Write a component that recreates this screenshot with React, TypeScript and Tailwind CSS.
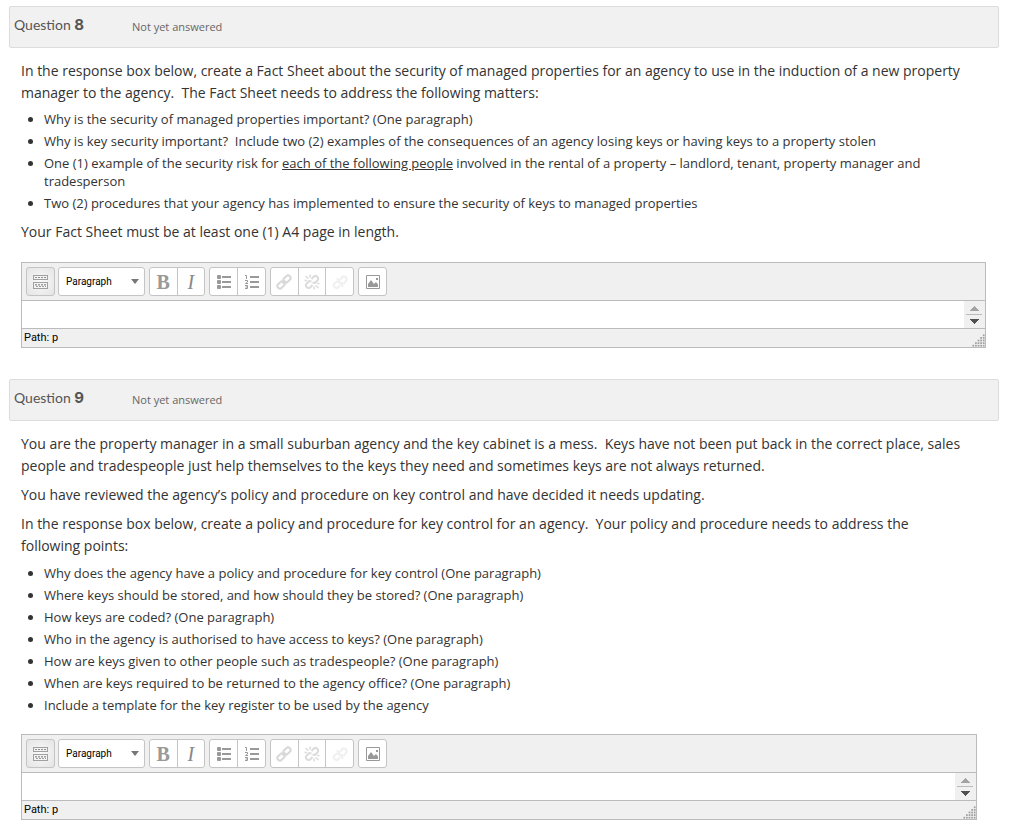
import React from "react";

function Group({ className, children }: { className: string; children: React.ReactNode }) {
  return (
    <div className={`flex h-[29px] divide-x divide-[#c4c4c4] overflow-hidden rounded-[3px] border border-[#c4c4c4] bg-white ${className}`}>
      {children}
    </div>
  );
}

function Tool({ label, disabled, children }: { label: string; disabled?: boolean; children: React.ReactNode }) {
  return (
    <button type="button" aria-label={label} disabled={disabled} className="flex min-w-0 flex-1 items-center justify-center">
      {children}
    </button>
  );
}

function KeyboardIcon() {
  return (
    <svg width="16" height="16" viewBox="0 0 16 16" shapeRendering="crispEdges">
      <path d="M.5 1.5h14v4H.5zM.5 8.5h14v6H.5z" fill="#f4f4f4" stroke="#a0a0a0" />
      <path d="M2 3.5h12" stroke="#909090" strokeDasharray="2 1" />
      <path d="M2 10.5h12M3 12.5h10" stroke="#a0a0a0" strokeDasharray="2 1" />
      <path d="M2 11.5h12" stroke="#c8c8c8" strokeDasharray="2 1" />
    </svg>
  );
}

function BulletIcon() {
  return (
    <svg width="16" height="16" viewBox="0 0 16 16" fill="#999">
      <path d="M6 2h9v2H6zM6 7h9v2H6zM6 12h9v2H6z" />
      <rect x="1" y="1" width="4" height="4" rx="1" />
      <rect x="1" y="6" width="4" height="4" rx="1" />
      <rect x="1" y="11" width="4" height="4" rx="1" />
    </svg>
  );
}

function NumberIcon() {
  return (
    <svg width="16" height="16" viewBox="0 0 16 16" fill="none" stroke="#999">
      <path d="M6 3h9M6 8h9M6 13h9" strokeWidth="2" />
      <path d="M1 1.500h1.500v3.500M1 6.500h2.500v1.500L1.500 9.500h2.500M1 11.500h2.500v3H1M1.500 13h2" />
    </svg>
  );
}

function LinkIcon() {
  return (
    <svg width="16" height="16" viewBox="0 0 16 16" fill="none" stroke="#d8d8d8" strokeWidth="2">
      <rect x="-4" y="-2.500" width="8" height="5" rx="2.500" transform="translate(5 11) rotate(-45)" />
      <rect x="-4" y="-2.500" width="8" height="5" rx="2.500" transform="translate(11 5) rotate(-45)" />
      <path d="M6.500 9.500l3-3" />
    </svg>
  );
}

function UnlinkIcon() {
  return (
    <svg width="16" height="16" viewBox="0 0 16 16" fill="none" stroke="#dcdcdc" strokeWidth="2">
      <path d="M7.500 5l2-2.200a2.600 2.600 0 0 1 3.800 3.700L11 9 8.500 8.500M8.500 11l-2 2.200a2.600 2.600 0 0 1-3.800-3.700L5 7l2.500.5" />
      <path d="M1.500 2l3 2.500M6 .5v3M.5 6.500h2.500M14.500 14l-3-2.500M10 15.500v-3M15.500 9.500h-2.500" strokeWidth="1.500" />
    </svg>
  );
}

function NoLinkIcon() {
  return (
    <svg width="16" height="16" viewBox="0 0 16 16" fill="none" stroke="#f0f0f0" strokeWidth="2">
      <path d="M8 6l2-2.500a2.400 2.400 0 0 1 4 3.500L12 9.500 9 9M8 11l-1.500 2a2.400 2.400 0 0 1-4-3.500L5 7.500l2 .5M5 4l6 9" />
    </svg>
  );
}

function ImageIcon() {
  return (
    <svg width="16" height="16" viewBox="0 0 16 16">
      <path d="M1.500 1.500h13v13h-13z" fill="#fff" stroke="#999" />
      <path d="M3 13v-3l3-4 3 4 2-2 2 2.500V13z" fill="#999" />
      <rect x="11" y="4" width="2" height="2" fill="#999" />
    </svg>
  );
}

function Grip() {
  return (
    <svg width="13" height="13" viewBox="0 0 15 15" fill="#a0a0a0">
      {[1, 2, 3, 4, 5].map((r) =>
        Array.from({ length: r }, (_, i) => (
          <rect key={`${r}-${i}`} x={12.5 - i * 3} y={r * 3 - 2.5} width="2" height="2" />
        ))
      )}
    </svg>
  );
}

function Editor({ id }: { id: string }) {
  return (
    <div className="border border-[#bbb] bg-[#f0f0f0] text-black">
      <div className="flex flex-wrap gap-1 border-b border-[#bbb] p-1">
        <button
          type="button"
          aria-label="Toolbar toggle"
          className="flex h-[29px] w-[29px] items-center justify-center rounded-[3px] border border-[#c4c4c4] bg-radial from-[#fafafa] to-[#e4e4e4]"
        >
          <KeyboardIcon />
        </button>
        <div className="relative -ml-px">
          <select
            aria-label="Paragraph format"
            className="block h-[29px] w-[87px] appearance-none rounded-[3px] border border-[#c4c4c4] bg-white pl-[7px] font-['Roboto',sans-serif] text-[10px]"
          >
            <option>Paragraph</option>
          </select>
          <svg width="8" height="5" viewBox="0 0 8 5" className="pointer-events-none absolute top-3 right-1.5">
            <path d="M0 0h8L4 5z" fill="#777" />
          </svg>
        </div>
        <Group className="w-[56px]">
          <Tool label="Bold">
            <span className="font-['Liberation_Serif',serif] text-[20px] leading-5 font-bold text-[#999]">B</span>
          </Tool>
          <Tool label="Italic">
            <span className="font-['Liberation_Serif',serif] text-[20px] leading-5 text-[#888] italic">I</span>
          </Tool>
        </Group>
        <Group className="w-[57px]">
          <Tool label="Unordered list"><BulletIcon /></Tool>
          <Tool label="Ordered list"><NumberIcon /></Tool>
        </Group>
        <Group className="w-[84px]">
          <Tool label="Link" disabled><LinkIcon /></Tool>
          <Tool label="Unlink" disabled><UnlinkIcon /></Tool>
          <Tool label="Prevent automatic linking" disabled><NoLinkIcon /></Tool>
        </Group>
        <Group className="w-[29px]">
          <Tool label="Image"><ImageIcon /></Tool>
        </Group>
      </div>
      <div className="flex h-[27px] bg-white">
        <textarea id={id} aria-label="Response" className="min-w-0 flex-1 resize-none overflow-hidden px-2 outline-none" />
        <div className="flex w-[21px] flex-col bg-[#f0f0f0] pt-[5px] pl-0.5">
          <svg width="16" height="19" viewBox="0 0 16 19" shapeRendering="crispEdges">
            <path d="M3 5h10L8 0z" fill="#a3a3a3" />
            <path d="M0 8h16v1H0z" fill="#bbb" />
            <path d="M3 13h10l-5 5z" fill="#505050" />
          </svg>
        </div>
      </div>
      <div className="flex h-[19px] items-end justify-between border-t border-[#bbb] pl-0.5">
        <span className="self-center font-['Roboto',sans-serif] text-[11px] leading-4">Path: p</span>
        <Grip />
      </div>
    </div>
  );
}

function Header({ n }: { n: number }) {
  return (
    <header className="flex h-[42px] items-center rounded-[2px] border border-[#dcdcdc] bg-[#f1f1f1] px-1 text-[#555]">
      <h3 className="w-[118px] pb-1 font-['Lato',sans-serif] text-[14px] leading-5">
        Question <b className="font-['Inter',sans-serif] text-[15px]">{n}</b>
      </h3>
      <div className="text-[11px] leading-4 text-[#666]">Not yet answered</div>
    </header>
  );
}

function Points({ children }: { children: React.ReactNode }) {
  return <ul className="flex list-disc flex-col gap-1 pl-[23px] text-[13px] leading-[18px]">{children}</ul>;
}

export default function App() {
  return (
    <main className="flex flex-col gap-[31px] bg-white pt-1.5 pr-[13px] pl-[9px] font-['Open_Sans',sans-serif] text-[14px] leading-[22px] text-[#333]">
      <section>
        <Header n={8} />
        <div className="pt-3 pr-[13px] pl-3">
          <p>
            In the response box below, create a Fact Sheet about the security of managed properties for an agency to use
            in the induction of a new property manager to the agency.&nbsp; The Fact Sheet needs to address the following matters:
          </p>
          <div className="pt-1.5 pb-[9px]">
            <Points>
              <li>Why is the security of managed properties important? (One paragraph)</li>
              <li>
                Why is key security important?&nbsp; Include two (2) examples of the consequences of an agency losing keys
                or having keys to a property stolen
              </li>
              <li>
                One (1) example of the security risk for <u>each of the following people</u> involved in the rental of a
                property – landlord, tenant, property manager and tradesperson
              </li>
              <li>Two (2) procedures that your agency has implemented to ensure the security of keys to managed properties</li>
            </Points>
          </div>
          <p className="pb-[19px]">Your Fact Sheet must be at least one (1) A4 page in length.</p>
          <Editor id="response-8" />
        </div>
      </section>
      <section>
        <Header n={9} />
        <div className="pt-3 pr-[22px] pl-3">
          <div className="flex flex-col gap-[7px] pr-2">
            <p>
              You are the property manager in a small suburban agency and the key cabinet is a mess.&nbsp; Keys have not
              been put back in the correct place, sales people and tradespeople just help themselves to the keys they need
              and sometimes keys are not always returned.
            </p>
            <p>You have reviewed the agency’s policy and procedure on key control and have decided it needs updating.</p>
            <p>
              In the response box below, create a policy and procedure for key control for an agency.&nbsp; Your policy and
              procedure needs to address the following points:
            </p>
          </div>
          <div className="pt-[7px] pb-5">
            <Points>
              <li>Why does the agency have a policy and procedure for key control (One paragraph)</li>
              <li>Where keys should be stored, and how should they be stored? (One paragraph)</li>
              <li>How keys are coded? (One paragraph)</li>
              <li>Who in the agency is authorised to have access to keys? (One paragraph)</li>
              <li>How are keys given to other people such as tradespeople? (One paragraph)</li>
              <li>When are keys required to be returned to the agency office? (One paragraph)</li>
              <li>Include a template for the key register to be used by the agency</li>
            </Points>
          </div>
          <Editor id="response-9" />
        </div>
      </section>
    </main>
  );
}
